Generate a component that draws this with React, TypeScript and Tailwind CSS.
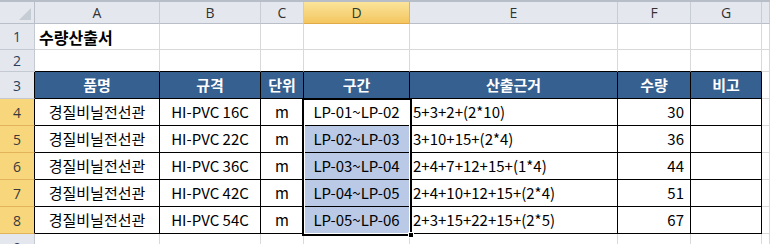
import React from "react";

const colW = ["w-[125px]", "w-[101px]", "w-[43px]", "w-[106px]", "w-[208px]", "w-[73px]", "w-[71px]", "w-[8px]"];
const letters = ["A", "B", "C", "D", "E", "F", "G", ""];

const rows = [
  ["경질비닐전선관", "HI-PVC 16C", "m", "LP-01~LP-02", "5+3+2+(2*10)", "30", ""],
  ["경질비닐전선관", "HI-PVC 22C", "m", "LP-02~LP-03", "3+10+15+(2*4)", "36", ""],
  ["경질비닐전선관", "HI-PVC 36C", "m", "LP-03~LP-04", "2+4+7+12+15+(1*4)", "44", ""],
  ["경질비닐전선관", "HI-PVC 42C", "m", "LP-04~LP-05", "2+4+10+12+15+(2*4)", "51", ""],
  ["경질비닐전선관", "HI-PVC 54C", "m", "LP-05~LP-06", "2+3+15+22+15+(2*5)", "67", ""],
];
const heads = ["품명", "규격", "단위", "구간", "산출근거", "수량", "비고"];

const hdrFont = "font-['Open_Sans','Liberation_Sans',sans-serif]";

function RowHeader({ n, h, sel, blackRight }: { n: string; h: string; sel?: boolean; blackRight?: boolean }) {
  const base = "flex w-[35px] shrink-0 items-center justify-center border-b border-r text-[14px] " + hdrFont + " " + h;
  const color = sel
    ? " border-b-[#e3b35c] bg-[#f8d67c] text-[#3a3a3a]"
    : " border-b-[#c5cad2] bg-[#e4e8ee] text-[#2c3e5a]";
  const right = blackRight ? " border-r-black" : sel ? " border-r-[#e3b35c]" : " border-r-[#c5cad2]";
  return <div className={base + color + right}>{n}</div>;
}

function Cell({ w, h, children, cls }: { w: string; h: string; children?: React.ReactNode; cls: string }) {
  return (
    <div className={"flex shrink-0 items-center overflow-hidden whitespace-nowrap border-b border-r " + w + " " + h + " " + cls}>
      {children}
    </div>
  );
}

const grid = "border-b-[#d9d9d9] border-r-[#d9d9d9]";

export default function App() {
  return (
    <div className="relative h-[244px] w-[770px] overflow-hidden bg-white font-['Noto_Sans_CJK_KR','Noto_Sans',sans-serif]">
      {/* column header */}
      <div className="flex h-[24px] border-t-2 border-t-[#b8bec7]">
        <div className="relative flex w-[35px] shrink-0 items-end justify-end border-b border-r border-b-[#b9bfc8] border-r-[#b9bfc8] bg-[#e4e8ee] p-[3px]">
          <svg width="12" height="12" viewBox="0 0 12 12">
            <polygon points="12,0 12,12 0,12" fill="#c6ccd4" />
          </svg>
        </div>
        {letters.map((l, i) => (
          <div
            key={i}
            className={
              "flex shrink-0 items-center justify-center border-b border-r text-[14px] " +
              hdrFont +
              " " +
              colW[i] +
              (i === 3
                ? " border-b-[#e0a94a] border-r-[#e0b45e] bg-gradient-to-b from-[#fbe49a] to-[#f3c65f] text-[#2d3b2d]"
                : " border-b-[#b9bfc8] border-r-[#c8cdd4] bg-[#e4e8ee] text-[#333]")
            }
          >
            {l}
          </div>
        ))}
      </div>

      {/* row 1 */}
      <div className="flex">
        <RowHeader n="1" h="h-[26px]" />
        {colW.map((w, i) => (
          <Cell key={i} w={w} h="h-[26px]" cls={grid}>
            {i === 0 && <span className="pl-[4px] text-[16px] font-bold text-black">수량산출서</span>}
          </Cell>
        ))}
      </div>

      {/* row 2 */}
      <div className="flex">
        <RowHeader n="2" h="h-[22px]" />
        {colW.map((w, i) => (
          <Cell key={i} w={w} h="h-[22px]" cls={i < 7 ? "border-b-black border-r-[#d9d9d9]" : grid} />
        ))}
      </div>

      {/* row 3 header */}
      <div className="flex">
        <RowHeader n="3" h="h-[27px]" blackRight />
        {colW.map((w, i) =>
          i < 7 ? (
            <Cell
              key={i}
              w={w}
              h="h-[27px]"
              cls="justify-center border-b-black border-r-black bg-[#35608f] text-[15px] font-bold text-white"
            >
              {heads[i]}
            </Cell>
          ) : (
            <Cell key={i} w={w} h="h-[27px]" cls={grid} />
          )
        )}
      </div>

      {/* data rows */}
      {rows.map((r, ri) => (
        <div className="flex" key={ri}>
          <RowHeader n={String(ri + 4)} h="h-[27px]" sel blackRight />
          {colW.map((w, i) => {
            if (i === 7) return <Cell key={i} w={w} h="h-[27px]" cls={grid} />;
            let align = "justify-center";
            if (i === 4) align = "justify-start pl-[3px]";
            if (i === 5) align = "justify-end pr-[6px]";
            const bg = i === 3 && ri > 0 ? " bg-[#b9c9e6]" : "";
            return (
              <Cell key={i} w={w} h="h-[27px]" cls={align + " border-b-black border-r-black text-[15px] text-black" + bg}>
                {r[i]}
              </Cell>
            );
          })}
        </div>
      ))}

      {/* row 9 */}
      <div className="flex">
        <RowHeader n="9" h="h-[27px]" />
        {colW.map((w, i) => (
          <Cell key={i} w={w} h="h-[27px]" cls={grid} />
        ))}
      </div>

      {/* selection overlay */}
      <div className="pointer-events-none absolute left-[302px] top-[98px] h-[138px] w-[110px] border-2 border-black shadow-[inset_0_0_0_1px_#ffffff]">
        <div className="absolute right-[-4px] bottom-[-4px] h-[6px] w-[6px] border border-white bg-black" />
      </div>
    </div>
  );
}
